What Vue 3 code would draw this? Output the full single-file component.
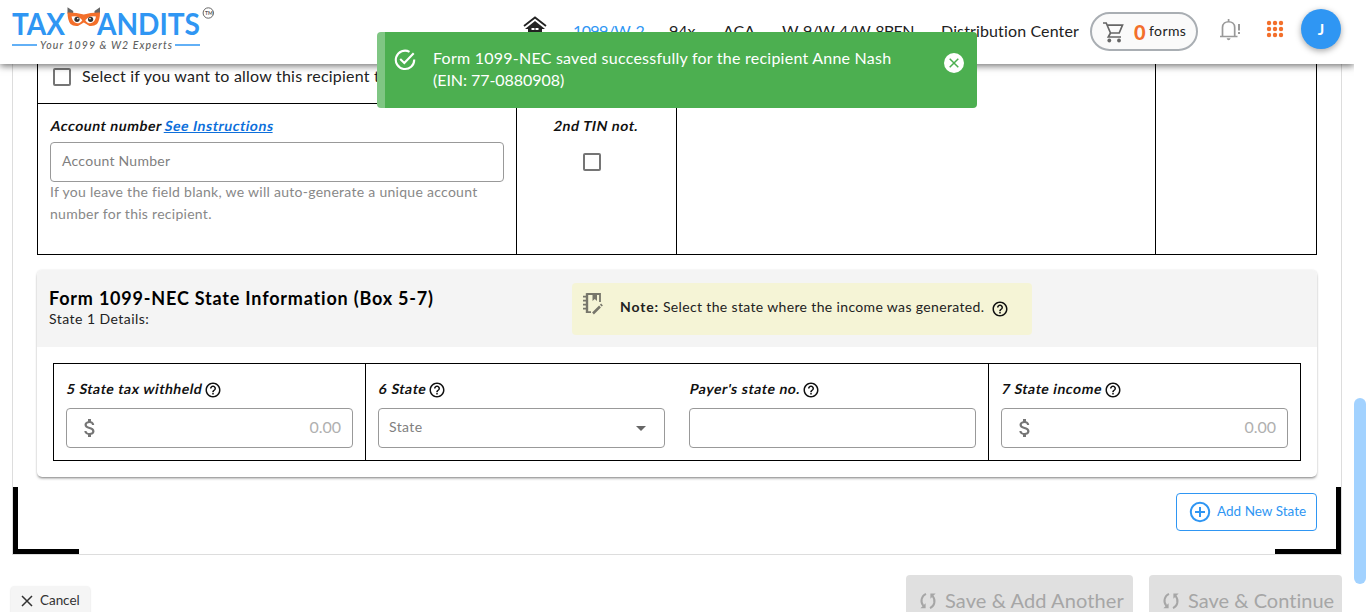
<script setup>
import { h } from 'vue'

const nav = [
  { label: '1099/W-2', cls: 'n1' },
  { label: '94x', cls: 'n2' },
  { label: 'ACA', cls: 'n3' },
  { label: 'W-9/W-4/W-8BEN', cls: 'n4' },
  { label: 'Distribution Center', cls: 'n5' },
]

const dots = [3, 9, 15].flatMap((y) => [3, 9, 15].map((x) => ({ x, y })))

const HelpIcon = () =>
  h('svg', { width: 18, height: 18, viewBox: '0 0 24 24', fill: 'currentColor' }, [
    h('path', {
      d: 'M11 18h2v-2h-2v2zm1-16C6.48 2 2 6.48 2 12s4.48 10 10 10 10-4.48 10-10S17.52 2 12 2zm0 18c-4.41 0-8-3.59-8-8s3.59-8 8-8 8 3.59 8 8-3.59 8-8 8zm0-14c-2.21 0-4 1.79-4 4h2c0-1.1.9-2 2-2s2 .9 2 2c0 2-3 1.75-3 5h2c0-2.25 3-2.5 3-5 0-2.21-1.79-4-4-4z',
    }),
  ])

const DollarIcon = () =>
  h('svg', { width: 24, height: 24, viewBox: '0 0 24 24', fill: '#757575' }, [
    h('path', {
      d: 'M11.8 10.9c-2.27-.59-3-1.2-3-2.15 0-1.09 1.01-1.85 2.7-1.85 1.78 0 2.44.85 2.5 2.1h2.21c-.07-1.72-1.12-3.3-3.21-3.81V3h-3v2.16c-1.94.42-3.5 1.68-3.5 3.61 0 2.31 1.91 3.46 4.7 4.13 2.5.6 3 1.48 3 2.41 0 .69-.49 1.79-2.7 1.79-2.06 0-2.87-.92-2.98-2.1h-2.2c.12 2.19 1.76 3.42 3.68 3.83V21h3v-2.15c1.95-.37 3.5-1.5 3.5-3.55 0-2.84-2.43-3.81-4.7-4.4z',
    }),
  ])

const SyncIcon = () =>
  h('svg', { width: 18, height: 18, viewBox: '0 0 18 18', fill: 'none', stroke: '#a6a6a6', 'stroke-width': 2 }, [
    h('path', { d: 'M7 1.8C2.6 3.8 0.8 9.5 4.4 14' }),
    h('path', { d: 'M11 16.2C15.4 14.2 17.2 8.5 13.6 4' }),
    h('path', { d: 'M1.4 16.2H6.6V11.2Z', fill: '#a6a6a6', stroke: 'none' }),
    h('path', { d: 'M16.6 1.6H11.4V6.8Z', fill: '#a6a6a6', stroke: 'none' }),
  ])
</script>

<template>
  <div class="page">
    <header class="topbar">
      <svg class="logo" width="204" height="50" viewBox="0 0 204 50">
        <g fill="#2f96f3" font-family="Lato, sans-serif" font-weight="700" font-size="31">
          <text x="0" y="29.3" textLength="53" lengthAdjust="spacingAndGlyphs">TAX</text>
          <text x="85" y="29.3" textLength="103" lengthAdjust="spacingAndGlyphs">ANDITS</text>
        </g>
        <path d="M55.500 1.200L61.200 5V7.500H55.500ZM88 1.200L82.500 5V7.500H88Z" fill="#666" />
        <path d="M55.500 6.500Q64 6.300 71.800 8.500Q79 6.300 88 6.500Q88 14 85 18Q82 20.500 77.500 20L71.800 16.500L66 20Q61 20.500 58.500 18Q55.500 14 55.500 6.500Z" fill="#f36f2b" />
        <path d="M59.500 10.500Q66 9 70.300 14.200Q68.500 17.500 65 17.300Q60.500 16.500 59.500 10.500ZM84 10.500Q77.500 9 73.300 14.200Q75 17.500 78.500 17.300Q83 16.500 84 10.500Z" fill="#fff" />
        <circle cx="65" cy="13.300" r="2.600" fill="#333" /><circle cx="78.600" cy="13.300" r="2.600" fill="#333" />
        <circle cx="65.800" cy="12.600" r="0.800" fill="#fff" /><circle cx="78" cy="12.600" r="0.800" fill="#fff" />
        <circle cx="196.300" cy="7" r="5.200" fill="none" stroke="#666" stroke-width="1" />
        <text x="193" y="9" fill="#555" font-family="Lato, sans-serif" font-weight="700" font-size="5">TM</text>
        <path d="M0 39H25M163 39H188" stroke="#2f96f3" stroke-width="1.400" />
        <text x="28" y="42.500" fill="#5f5f5f" font-family="Lato, sans-serif" font-weight="500" font-style="italic" font-size="10.500" textLength="132">Your 1099 &amp; W2 Experts</text>
      </svg>
      <svg class="home" width="24" height="24" viewBox="0 0 24 24">
        <path d="M1 10L12 1.500L23 10" fill="none" stroke="#222" stroke-width="1.800" />
        <path d="M12 5L22 13H19V23H5V13H2Z" fill="#222" />
        <path d="M8.500 12H11.500V14H8.500ZM12.500 12H15.500V14H12.500Z" fill="#fff" />
      </svg>
      <nav class="nav">
        <a v-for="n in nav" :key="n.label" :class="n.cls">{{ n.label }}</a>
      </nav>
      <div class="cart">
        <svg width="24" height="24" viewBox="0 0 24 24" fill="none" stroke="#666" stroke-width="1.700">
          <path d="M2 3H5.200L9.500 13H18.200L21.500 5.200H6.200M9.500 13L7.300 17H20" />
          <circle cx="8.300" cy="20.500" r="1.900" fill="#666" stroke="none" /><circle cx="18" cy="20.500" r="1.900" fill="#666" stroke="none" />
        </svg>
        <b>0</b><span>forms</span>
      </div>
      <svg class="bell" width="22" height="24" viewBox="0 0 22 24" fill="none" stroke="#999" stroke-width="1.700">
        <path d="M1 18.500H18.500M3.500 18V9.500C3.500 1.800 15.700 1.800 15.700 9.500V18M9.600 3.500V1" />
        <path d="M7.600 20.300H11.600Q11 22.300 9.600 22.300Q8.200 22.300 7.600 20.300Z" fill="#999" stroke="none" />
        <path d="M20 6V12.500M20 14V16" stroke-width="2" />
      </svg>
      <svg class="apps" width="18" height="18" viewBox="0 0 18 18" fill="#f36f2b">
        <circle v-for="d in dots" :key="d.x + '-' + d.y" :cx="d.x" :cy="d.y" r="2.200" />
      </svg>
      <div class="avatar">J</div>
    </header>

    <main class="frame">
      <section class="recipient">
        <div class="col-account">
          <label class="allow"><i class="box"></i><span>Select if you want to allow this recipient to</span></label>
          <div class="account">
            <p class="lbl"><span class="t-acc">Account number</span> <a>See Instructions</a></p>
            <div class="input"><span class="t-ph">Account Number</span></div>
            <p class="hint">If you leave the field blank, we will auto-generate a unique account<br />number for this recipient.</p>
          </div>
        </div>
        <div class="col-tin"><p class="lbl"><span>2nd TIN not.</span></p><i class="box"></i></div>
        <div class="col-wide"></div>
        <div class="col-last"></div>
      </section>

      <section class="card">
        <div class="card-head">
          <div class="titles">
            <h2>Form 1099-NEC State Information (Box 5-7)</h2>
            <p>State 1 Details:</p>
          </div>
          <div class="note">
            <svg width="22" height="24" viewBox="0 0 22 24" fill="none" stroke="#77766b" stroke-width="1.800">
              <path d="M9 20.200H5M5 2H18V10" />
              <path d="M5 1.100V21" stroke-width="2.400" />
              <path d="M1 4.700H4M1 8.700H4M1 12.700H4M1 16.700H4" stroke-width="1.700" />
              <path d="M10.500 2H15V9L12.800 7L10.500 9Z" fill="#77766b" stroke="none" />
              <path d="M11 21.500L18 14.500M18.800 13.700L20 12.500" stroke-width="2.500" />
            </svg>
            <p><b>Note:</b> <span>Select the state where the income was generated.</span></p>
            <HelpIcon />
          </div>
        </div>
        <div class="state-grid">
          <div class="cell">
            <p class="lbl"><span>5 State tax withheld</span><HelpIcon /></p>
            <div class="input money"><DollarIcon /><span>0.00</span></div>
          </div>
          <div class="cell double">
            <div>
              <p class="lbl"><span>6 State</span><HelpIcon /></p>
              <div class="input select"><span>State</span><i class="caret"></i></div>
            </div>
            <div>
              <p class="lbl"><span>Payer's state no.</span><HelpIcon /></p>
              <div class="input"></div>
            </div>
          </div>
          <div class="cell">
            <p class="lbl"><span>7 State income</span><HelpIcon /></p>
            <div class="input money"><DollarIcon /><span>0.00</span></div>
          </div>
        </div>
      </section>

      <button class="add">
        <svg width="22" height="22" viewBox="0 0 22 22" fill="none" stroke="#2f96f3" stroke-width="2"><circle cx="11" cy="11" r="9.200" /><path d="M11 6V16M6 11H16" /></svg>
        <span>Add New State</span>
      </button>
      <i class="corner left"></i>
      <i class="corner right"></i>
    </main>

    <footer class="actions">
      <button class="cancel">
        <svg width="12" height="12" viewBox="0 0 12 12" stroke="#333" stroke-width="1.500"><path d="M1 1L11 11M11 1L1 11" /></svg>
        <span>Cancel</span>
      </button>
      <button class="save another"><SyncIcon /><span>Save &amp; Add Another</span></button>
      <button class="save continue"><SyncIcon /><span>Save &amp; Continue</span></button>
    </footer>

    <div class="thumb"></div>

    <div class="toast">
      <svg width="22" height="22" viewBox="0 0 22 22" fill="none" stroke="#fff" stroke-width="2.100">
        <path d="M15.500 2.800A9.200 9.200 0 1 0 20.200 10.500" /><path d="M6.200 10L10.300 14L19.700 4.300" />
      </svg>
      <p>Form 1099-NEC saved successfully for the recipient Anne Nash<br /><span class="ein">(EIN: 77-0880908)</span></p>
      <svg class="close" width="20" height="20" viewBox="0 0 20 20"><circle cx="10" cy="10" r="10" fill="#fff" /><path d="M5.700 5.700L14.300 14.300M14.300 5.700L5.700 14.300" stroke="#4caf50" stroke-width="1.500" /></svg>
    </div>
  </div>
</template>

<style>
body { margin: 0; background: #fff; overflow: hidden; }
</style>

<style scoped>
* { box-sizing: border-box; }
.page { position: relative; width: 1366px; height: 612px; overflow: hidden; font-family: Lato, "Open Sans", sans-serif; color: #222; background: #fff; }
p, h2 { margin: 0; white-space: nowrap; }
a, span { white-space: nowrap; }
button { font-family: inherit; padding: 0; }
svg { display: block; flex: none; }

.topbar { position: relative; z-index: 2; display: flex; width: 1354px; height: 64px; background: #fff; box-shadow: 0 2px 7px rgba(0, 0, 0, .55); clip-path: inset(0 0 -14px 0); }
.logo { margin: 6px 0 0 12px; overflow: visible; }
.home { margin: 16px 0 0 307px; }
.nav { display: flex; margin: 19px 0 0 26px; width: 517px; height: 24px; line-height: 24px; font-size: 16px; }
.nav a { flex: none; }
.n1 { width: 96px; color: #2f96f3; letter-spacing: -.6px; }
.n2 { width: 54px; }
.n3 { width: 59px; }
.n4 { width: 159px; letter-spacing: -.65px; }
.n5 { letter-spacing: .13px; }
.cart { display: flex; width: 108px; height: 39px; margin-top: 12px; border: 2px solid #a9aeb3; border-radius: 20px; background: #fafafa; }
.cart svg { margin: 6px 0 0 9px; }
.cart b { margin-left: 9px; font-size: 20px; line-height: 36px; color: #f36f2b; width: 15px; font-weight: 900; }
.cart span { font-size: 14px; line-height: 34px; letter-spacing: .4px; }
.bell { margin: 18px 0 0 21px; }
.apps { margin: 20px 0 0 25px; }
.avatar { margin: 9px 0 0 17px; width: 40px; height: 40px; border-radius: 50%; background: #2f96f3; color: #fff; font-size: 15px; font-weight: 700; line-height: 40px; text-align: center; box-shadow: 0 2px 6px rgba(0, 0, 0, .35); }

.frame { position: relative; width: 1330px; height: 491px; margin-left: 12px; border: 1px solid #ddd; border-top: 0; padding: 0 24px; }
.recipient { display: flex; height: 191px; width: 1280px; border: 1px solid #000; border-top: 0; }
.col-account { width: 478px; }
.col-tin { width: 161px; border: solid #000; border-width: 0 1px; padding-top: 52px; }
.col-wide { width: 478px; }
.col-last { flex: 1; border-left: 1px solid #000; }
.allow { display: flex; height: 40px; border-bottom: 1px solid #000; }
.box { display: block; width: 18px; height: 18px; border: 2px solid #757575; border-radius: 2px; }
.allow .box { margin: 4px 0 0 15px; }
.allow span { margin-left: 11px; line-height: 24px; font-size: 16px; letter-spacing: .21px; }
.account { padding: 12px 12px 0; width: 478px; }
.lbl { display: flex; height: 20px; line-height: 20px; font-size: 14px; font-weight: 700; color: #111; letter-spacing: .55px; }
.lbl a, .lbl span { transform: skewX(-11deg); }
.lbl span { margin-left: .5px; }
.lbl a { color: #0d6fdb; text-decoration: underline; margin-left: 4px; }
.input { display: flex; height: 40px; border: 1px solid #999; border-radius: 4px; }
.account .input { margin-top: 6px; width: 454px; padding-left: 11px; line-height: 36px; font-size: 14px; color: #808080; letter-spacing: .26px; }
.hint { line-height: 22px; font-size: 14px; color: #888; letter-spacing: .28px; margin-top: -1px; }
.col-tin .lbl { justify-content: center; }
.col-tin .box { margin: 17px 0 0 66px; }

.card { width: 1280px; height: 207px; margin-top: 15px; border-radius: 5px; box-shadow: 0 2px 3px -1px rgba(0, 0, 0, .5), 0 0 2px rgba(0, 0, 0, .12); }
.card-head { display: flex; height: 77px; background: #f4f4f4; border-radius: 5px 5px 0 0; }
.titles { width: 535px; padding: 15px 0 0 12px; }
.titles h2 { line-height: 26px; font-size: 18px; font-weight: 700; color: #000; letter-spacing: .8px; }
.titles p { line-height: 17px; margin-top: -1px; font-size: 14px; letter-spacing: .46px; }
.note { display: flex; width: 460px; height: 52px; margin-top: 13px; background: #f5f4d6; border-radius: 4px; }
.note svg:first-child { margin: 9px 0 0 10px; }
.note p { margin-left: 16px; line-height: 48px; font-size: 14px; width: 371px; letter-spacing: .35px; }
.note b { letter-spacing: .85px; }
.note svg:last-child { margin-top: 17px; color: #111; }
.state-grid { display: flex; width: 1248px; height: 98px; margin: 16px 0 0 16px; border: 1px solid #000; }
.cell { width: 311px; padding: 15px 0 0 12px; }
.cell + .cell { border-left: 1px solid #000; }
.cell.double { display: flex; gap: 24px; width: 623px; }
.cell:last-child { width: 312px; }
.cell .input { width: 287px; margin-top: 9px; }
.lbl svg { margin: 2px 0 0 2px; }
.money { justify-content: space-between; align-items: center; padding: 0 11px; font-size: 16px; color: #b0b0b0; }
.money span { margin-top: -3px; }
.select { align-items: center; justify-content: space-between; padding: 0 18px 3px 10px; font-size: 14px; color: #808080; letter-spacing: .4px; }
.caret { border: 5px solid transparent; border-top-color: #666; border-bottom: 0; margin-top: 4px; }

.add { display: flex; width: 141px; height: 38px; margin: 16px 0 0 1139px; border: 1px solid #2f96f3; border-radius: 4px; background: #fff; color: #2f96f3; align-items: center; padding-left: 12px; font-size: 13.500px; }
.add span { margin-left: 6px; letter-spacing: .02px; margin-top: -2px; }
.corner { position: absolute; bottom: 0; width: 66px; height: 67px; border: 0 solid #000; border-bottom-width: 5px; }
.corner.left { left: 0; border-left-width: 5px; }
.corner.right { right: 0; border-right-width: 5px; }

.actions { display: flex; padding: 20px 0 0 11px; height: 57px; }
.actions button { display: flex; border: 0; }
.cancel { width: 79px; height: 36px; margin-top: 11px; background: #f5f5f5; border-radius: 4px; box-shadow: 0 1px 2px rgba(0, 0, 0, .2); color: #333; font-size: 13.500px; }
.cancel svg { margin: 9px 0 0 10px; }
.cancel span { margin-left: 7px; line-height: 29px; letter-spacing: -.05px; }
.save { height: 48px; background: #e0e0e0; border-radius: 4px; color: #a6a6a6; font-size: 20px; }
.save svg { margin: 17px 0 0 13px; }
.save span { margin-left: 8px; line-height: 50px; letter-spacing: .1px; }
.another { width: 227px; margin-left: 816px; }
.continue { width: 193px; margin-left: 16px; }
.save.continue span { letter-spacing: .02px; }

.thumb { position: absolute; left: 1354px; top: 398px; width: 12px; height: 186px; border-radius: 6px; background: #a2d2ff; }
.toast { position: absolute; z-index: 3; left: 377px; top: 32px; width: 600px; height: 76px; display: flex; border-left: 8px solid #7fc683; border-radius: 4px; background: #4caf50; color: #fff; overflow: hidden; }
.toast svg { margin: 17px 0 0 9px; }
.toast p { margin: 15px 0 0 17px; width: 495px; line-height: 22px; font-size: 16px; letter-spacing: .24px; }
.ein { letter-spacing: -.05px; }
.toast .close { margin: 21px 0 0 16px; }
</style>
